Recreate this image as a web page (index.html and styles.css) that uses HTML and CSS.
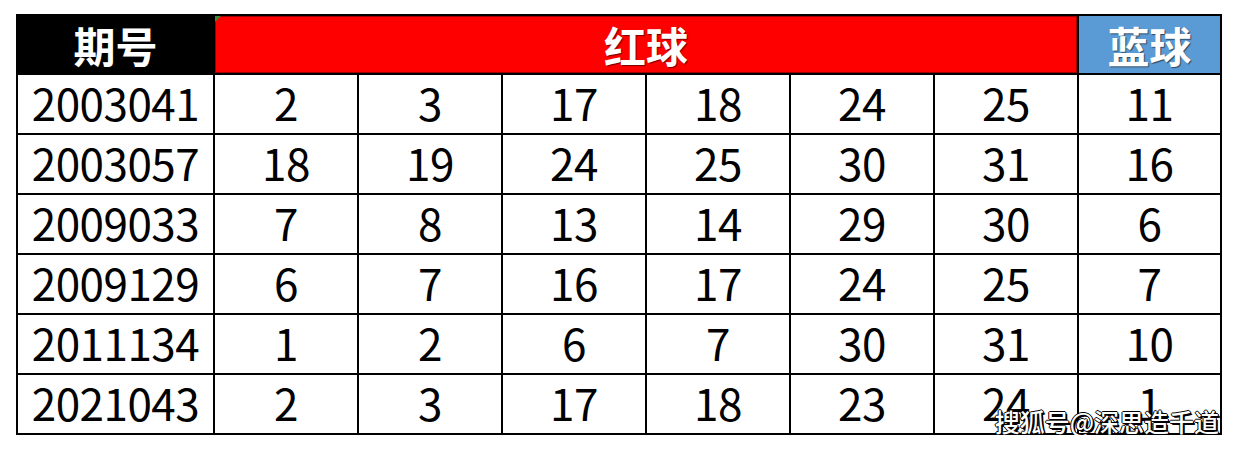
FILE: index.html
```html
<!DOCTYPE html>
<html lang="zh-CN">
<head>
<meta charset="utf-8">
<title>期号 红球 蓝球</title>
<link rel="stylesheet" href="styles.css">
</head>
<body>
<div class="wrap">
  <div class="grid">
    <div class="hd hd-black">期号</div>
    <div class="hd hd-red">红球<span class="tick"></span></div>
    <div class="hd hd-blue">蓝球</div>

    <div class="c">2003041</div><div class="c">2</div><div class="c">3</div><div class="c">17</div><div class="c">18</div><div class="c">24</div><div class="c">25</div><div class="c">11</div>
    <div class="c">2003057</div><div class="c">18</div><div class="c">19</div><div class="c">24</div><div class="c">25</div><div class="c">30</div><div class="c">31</div><div class="c">16</div>
    <div class="c">2009033</div><div class="c">7</div><div class="c">8</div><div class="c">13</div><div class="c">14</div><div class="c">29</div><div class="c">30</div><div class="c">6</div>
    <div class="c">2009129</div><div class="c">6</div><div class="c">7</div><div class="c">16</div><div class="c">17</div><div class="c">24</div><div class="c">25</div><div class="c">7</div>
    <div class="c">2011134</div><div class="c">1</div><div class="c">2</div><div class="c">6</div><div class="c">7</div><div class="c">30</div><div class="c">31</div><div class="c">10</div>
    <div class="c">2021043</div><div class="c">2</div><div class="c">3</div><div class="c">17</div><div class="c">18</div><div class="c">23</div><div class="c">24</div><div class="c">1</div>
  </div>
  <div class="watermark">搜狐号@深思造千道</div>
</div>
</body>
</html>
```

FILE: styles.css
```css
html, body {
  margin: 0;
  padding: 0;
  background: #ffffff;
}

.wrap {
  position: relative;
  margin: 14px 0 0 16px;
  width: 1206px;
}

.grid {
  display: grid;
  grid-template-columns: 195px repeat(6, 142px) 141px;
  grid-template-rows: 57px repeat(6, 58px);
  gap: 2px;
  padding: 2px;
  background: #000000;
  font-family: "Noto Sans CJK SC", "Noto Sans", sans-serif;
}

.hd {
  display: flex;
  align-items: center;
  justify-content: center;
  color: #ffffff;
  font-weight: 700;
  font-size: 42px;
  letter-spacing: 0;
  line-height: 1;
  text-shadow: 1px 1px 1px rgba(0, 0, 0, 0.55);
}

.hd-black {
  background: #000000;
}

.hd-red {
  position: relative;
  grid-column: span 6;
  background: #ff0000;
  box-shadow: inset 0 0 0 1px #9a0000;
}

.hd-blue {
  background: #5b9bd5;
}

.tick {
  position: absolute;
  left: 0;
  top: 0;
  width: 0;
  height: 0;
  border-top: 6px solid #3a8a3a;
  border-right: 6px solid transparent;
}

.c {
  display: flex;
  align-items: center;
  justify-content: center;
  background: #ffffff;
  color: #000000;
  font-size: 44px;
  letter-spacing: -0.5px;
  line-height: 1;
  padding-bottom: 5px;
  box-sizing: border-box;
}

.watermark {
  position: absolute;
  right: 3px;
  bottom: -1px;
  font-family: "Noto Sans CJK SC", sans-serif;
  font-size: 25px;
  font-weight: 500;
  line-height: 1.2;
  color: #ffffff;
  text-shadow:
    1px 1px 0 #000,
    2px 2px 0 #000,
    -1px 0 0 #000,
    0 -1px 0 #000,
    1px 0 0 #000,
    0 1px 0 #000;
}
```
